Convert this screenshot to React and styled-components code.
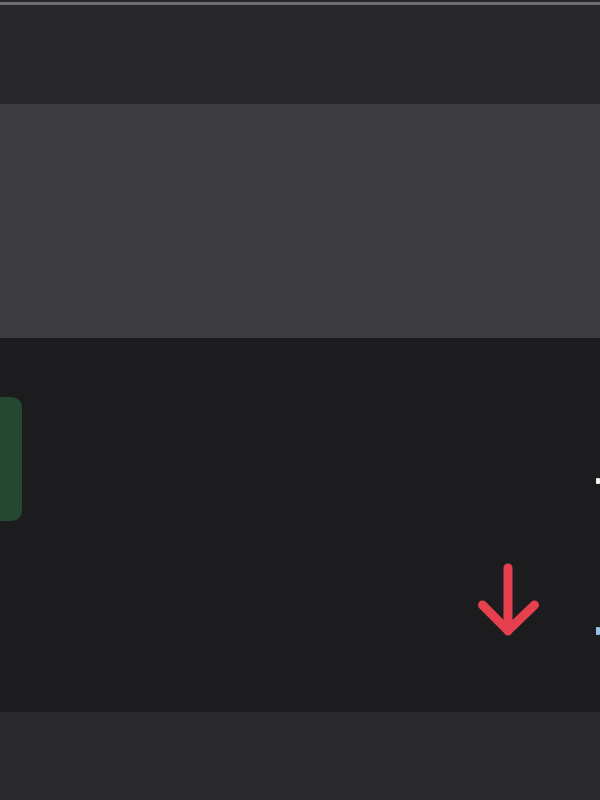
import React from 'react';
import styled, {createGlobalStyle} from 'styled-components';

const Global = createGlobalStyle`
  html, body {
    margin: 0;
    padding: 0;
    background: #1c1c1f;
    font-family: "Inter", "Liberation Sans", sans-serif;
  }
`;

const Page = styled.div`
  display: flex;
  flex-direction: column;
  width: 600px;
  height: 800px;
  overflow: hidden;
`;

const Header = styled.div`
  height: 104px;
  background: #28282c;
  display: flex;
  flex-direction: column;
`;

const TopLine = styled.div`
  margin-top: 2px;
  height: 3px;
  background: #6e6e74;
`;

const Band = styled.div`
  height: 234px;
  background: #3c3c3f;
`;

const Main = styled.div`
  height: 374px;
  background: #1c1c1f;
  display: flex;
  align-items: flex-start;
`;

const Pill = styled.div`
  margin-top: 59px;
  margin-left: -20px;
  width: 42px;
  height: 124px;
  border-radius: 10px;
  background: #254832;
  flex-shrink: 0;
`;

const ArrowWrap = styled.div`
  margin-top: 222px;
  margin-left: auto;
  width: 76px;
  height: 80px;
  display: flex;
  align-items: center;
  justify-content: center;
`;

const Edge = styled.div`
  margin-left: 50px;
  width: 4px;
  display: flex;
  flex-direction: column;
  gap: 143px;
  padding-top: 140px;
`;

const Mark = styled.div`
  width: 4px;
  height: ${p => p.h}px;
  border-radius: 1px;
  background: ${p => p.color};
`;

const Footer = styled.div`
  flex: 1;
  background: #2a2a2e;
`;

const DownArrow = () => (
  <svg width="76" height="80" viewBox="0 0 76 80" fill="none">
    <path
      d="M38 8 V71 M12.5 45 L38 70.5 L64.5 45"
      stroke="#e6404f"
      strokeWidth="9"
      strokeLinecap="round"
      strokeLinejoin="round"
    />
  </svg>
);

export default function App() {
  return (
    <Page>
      <Global />
      <Header>
        <TopLine />
      </Header>
      <Band />
      <Main>
        <Pill />
        <ArrowWrap>
          <DownArrow />
        </ArrowWrap>
        <Edge>
          <Mark h={6} color="#f2f2f2" />
          <Mark h={8} color="#8fc4e8" />
        </Edge>
      </Main>
      <Footer />
    </Page>
  );
}
